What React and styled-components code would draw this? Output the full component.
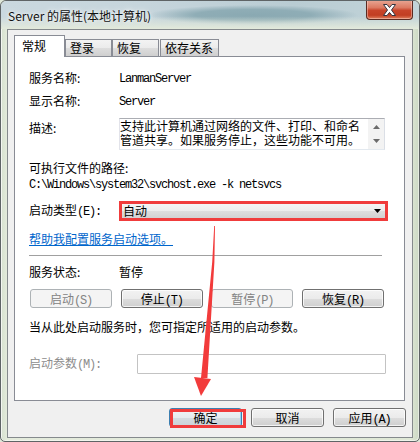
import React from "react";
import styled, { createGlobalStyle } from "styled-components";

const CJK = `"Noto Sans CJK SC", "Noto Sans", sans-serif`;
const MONO = `"Liberation Mono", "DejaVu Sans Mono", monospace`;

const Global = createGlobalStyle`
  html, body { margin: 0; padding: 0; width: 420px; height: 442px; overflow: hidden; background: #dfe7d8; }
  #root { width: 420px; height: 442px; }
  * { box-sizing: border-box; }
`;

const Window = styled.div`
  position: relative;
  width: 420px;
  height: 442px;
  border: 1px solid #5f6466;
  border-radius: 6px 6px 5px 5px;
  background: linear-gradient(90deg, #d6e1cf 0%, #e4ebdc 1.5%, #e2eadb 50%, #dfe8d6 98%, #cbd8c3 100%);
  box-shadow: inset 1px 1px 0 rgba(255, 255, 255, 0.7), inset -1px -1px 0 rgba(255, 255, 255, 0.5);
  display: flex;
  flex-direction: column;
  overflow: hidden;
  font-family: ${CJK};
  font-size: 12px;
  color: #000;
`;

const TitleBar = styled.div`
  height: 28px;
  flex-shrink: 0;
  display: flex;
  align-items: flex-start;
  justify-content: space-between;
  padding: 0 6px 0 7px;
  border-radius: 5px 5px 0 0;
  background:
    linear-gradient(180deg, rgba(228, 235, 220, 0) 0%, rgba(228, 235, 220, 0) 55%, #e3eadb 100%),
    radial-gradient(ellipse 105px 10px at 252px 14px, #8aa9b2 0%, #8fadb6 55%, rgba(150, 178, 186, 0) 100%),
    linear-gradient(90deg, #cad8df 0%, #c6d5dc 35%, #b9ccd3 70%, #c2d4d9 100%);
`;

const Title = styled.div`
  margin-top: 6px;
  font-family: ${CJK};
  font-size: 12px;
  line-height: 17px;
  color: #101010;
  text-shadow: 0 0 6px rgba(255, 255, 255, 0.9), 0 0 3px rgba(255, 255, 255, 0.8);
  white-space: nowrap;
`;

const CloseBtn = styled.div`
  margin-top: -1px;
  width: 47px;
  height: 20px;
  border: 1px solid #5a2b22;
  border-top: none;
  border-radius: 0 0 4px 4px;
  background: linear-gradient(180deg, #e9a896 0%, #dc7a62 40%, #c8442a 55%, #c23e22 80%, #e0805f 100%);
  box-shadow: inset 0 0 0 1px rgba(255, 220, 210, 0.45);
  display: flex;
  align-items: center;
  justify-content: center;
`;

const Client = styled.div`
  flex: 1;
  margin: 0 6px 3px 6px;
  border: 1px solid #858a8d;
  background: #f0f0f0;
  padding: 5px 6px 0 6px;
  display: flex;
  flex-direction: column;
`;

const TabStrip = styled.div`
  height: 22px;
  margin-bottom: -1px;
  display: flex;
  align-items: flex-end;
  position: relative;
  z-index: 2;
`;

const Tab = styled.div`
  width: ${(p) => p.$w}px;
  margin-left: ${(p) => p.$ml || 0}px;
  height: ${(p) => (p.$active ? 22 : 17)}px;
  margin-bottom: ${(p) => (p.$active ? 0 : 1)}px;
  border: 1px solid #898c95;
  border-bottom: none;
  background: ${(p) =>
    p.$active ? "#ffffff" : "linear-gradient(180deg, #f3f3f3 0%, #ebebeb 50%, #dddddd 51%, #cfcfcf 100%)"};
  padding-left: ${(p) => (p.$active ? 7 : 4)}px;
  line-height: ${(p) => (p.$active ? 19 : 16)}px;
  font-size: 12px;
  white-space: nowrap;
`;

const Panel = styled.div`
  width: 391px;
  height: 345px;
  border: 1px solid #898c95;
  background: #ffffff;
  padding: 11px 0 0 14px;
  display: flex;
  flex-direction: column;
  position: relative;
  z-index: 1;
`;

const Row = styled.div`
  display: flex;
  align-items: ${(p) => (p.$top ? "flex-start" : "center")};
  height: ${(p) => p.$h}px;
  margin-top: ${(p) => p.$mt || 0}px;
  flex-shrink: 0;
`;

const Label = styled.div`
  width: ${(p) => p.$w || 90}px;
  flex-shrink: 0;
  line-height: 20px;
  color: ${(p) => (p.$disabled ? "#8d8d8d" : "#000")};
  white-space: nowrap;
`;

const Value = styled.div`
  line-height: 20px;
  white-space: nowrap;
`;

const Latin = styled.span`
  font-family: ${MONO};
  font-size: 12px;
  letter-spacing: -1.2px;
`;

const Line = styled.div`
  line-height: ${(p) => p.$lh}px;
  margin-top: ${(p) => p.$mt || 0}px;
  white-space: nowrap;
  flex-shrink: 0;
`;

const Link = styled(Line)`
  color: #0066cc;
  text-decoration: underline;
  text-underline-offset: 1px;
  align-self: flex-start;
`;

const DescBox = styled.div`
  width: 266px;
  height: 32px;
  border: 1px solid;
  border-color: #abadb3 #dbdfe6 #e3e9ef #e2e3ea;
  background: #fff;
  display: flex;
`;

const DescText = styled.div`
  flex: 1;
  line-height: 14px;
  white-space: nowrap;
`;

const ScrollBar = styled.div`
  width: 16px;
  background: #f3f3f3;
  display: flex;
  flex-direction: column;
  align-items: center;
  justify-content: space-between;
  padding: 6px 0 6px;
`;

const Combo = styled.div`
  width: 269px;
  height: 20px;
  border: 3px solid #f03c3c;
  background: linear-gradient(180deg, #f4f4f4 0%, #ececec 50%, #dedede 51%, #d2d2d2 100%);
  display: flex;
  align-items: center;
  justify-content: space-between;
  padding: 0 4px 0 1px;
  line-height: 14px;
`;

const Separator = styled.div`
  width: 353px;
  height: 1px;
  margin-top: 8px;
  background: #a0a0a0;
  flex-shrink: 0;
`;

const ButtonRow = styled.div`
  width: 354px;
  margin-left: 1px;
  margin-top: ${(p) => p.$mt || 0}px;
  height: 19px;
  display: flex;
  justify-content: space-between;
  flex-shrink: 0;
`;

const Btn = styled.button`
  width: ${(p) => p.$w}px;
  height: 19px;
  padding: 0;
  margin: 0;
  border: 1px solid ${(p) => (p.disabled ? "#adb2b5" : p.$default ? "#3c7fb1" : "#707070")};
  border-radius: 3px;
  background: ${(p) =>
    p.disabled
      ? "#f4f4f4"
      : p.$default
      ? "linear-gradient(180deg, #f1f4f6 0%, #e6ebee 50%, #d5dce0 51%, #cbd3d8 100%)"
      : "linear-gradient(180deg, #f2f2f2 0%, #ebebeb 50%, #dddddd 51%, #cfcfcf 100%)"};
  box-shadow: ${(p) =>
    p.disabled ? "none" : p.$default ? "inset 0 0 0 1px #8fd6f5" : "inset 0 0 0 1px rgba(255,255,255,0.75)"};
  color: ${(p) => (p.disabled ? "#838383" : "#000")};
  font-family: ${CJK};
  font-size: 12px;
  line-height: 17px;
  white-space: nowrap;
  cursor: default;
`;

const Input = styled.div`
  width: 249px;
  height: 20px;
  border: 1px solid #c3c3c3;
  border-radius: 1px;
  background: #fff;
`;

const ButtonBar = styled.div`
  margin-top: 7px;
  display: flex;
  justify-content: flex-end;
  gap: 9px;
`;

const Marked = styled.div`
  position: relative;
  &::after {
    content: "";
    position: absolute;
    top: 1px;
    left: 1px;
    right: -4px;
    bottom: -1px;
    border: 3px solid #f03c3c;
    pointer-events: none;
  }
`;

const Overlay = styled.svg`
  position: absolute;
  top: -1px;
  left: -1px;
  pointer-events: none;
  z-index: 10;
`;

const Arrow = ({ up, color = "#6b6b6b" }) => (
  <svg width="7" height="4" viewBox="0 0 7 4">
    <polygon points={up ? "3.5,0 7,4 0,4" : "0,0 7,0 3.5,4"} fill={color} />
  </svg>
);

export default function App() {
  return (
    <>
      <Global />
      <Window>
        <TitleBar>
          <Title>Server 的属性(本地计算机)</Title>
          <CloseBtn>
            <svg width="15" height="12" viewBox="0 0 15 12">
              <polygon
                points="1.5,0.5 5,0.5 7.5,3.6 10,0.5 13.5,0.5 9.5,6 13.5,11.5 10,11.5 7.5,8.4 5,11.5 1.5,11.5 5.5,6"
                fill="#ffffff"
                stroke="#34343f"
                strokeWidth="1"
                strokeLinejoin="round"
              />
            </svg>
          </CloseBtn>
        </TitleBar>
        <Client>
          <TabStrip>
            <Tab $active $w={51}>常规</Tab>
            <Tab $w={47}>登录</Tab>
            <Tab $w={47}>恢复</Tab>
            <Tab $w={59} $ml={1}>依存关系</Tab>
          </TabStrip>
          <Panel>
            <Row $h={20}>
              <Label>服务名称:</Label>
              <Value><Latin>LanmanServer</Latin></Value>
            </Row>
            <Row $h={20} $mt={3}>
              <Label>显示名称:</Label>
              <Value><Latin>Server</Latin></Value>
            </Row>
            <Row $h={32} $mt={7} $top>
              <Label>描述:</Label>
              <DescBox>
                <DescText>
                  <div>支持此计算机通过网络的文件、打印、和命名</div>
                  <div>管道共享。如果服务停止，这些功能不可用。</div>
                </DescText>
                <ScrollBar>
                  <Arrow up />
                  <Arrow />
                </ScrollBar>
              </DescBox>
            </Row>
            <Line $lh={16} $mt={10}>可执行文件的路径:</Line>
            <Line $lh={14}>
              <Latin>{"C:\\Windows\\system32\\svchost.exe -k netsvcs"}</Latin>
            </Line>
            <Row $h={20} $mt={9}>
              <Label>启动类型<Latin>(E):</Latin></Label>
              <Combo>
                <span>自动</span>
                <Arrow color="#000" />
              </Combo>
            </Row>
            <Link $lh={16} $mt={10}>帮助我配置服务启动选项。</Link>
            <Separator />
            <Row $h={16} $mt={8}>
              <Label>服务状态:</Label>
              <Value>暂停</Value>
            </Row>
            <ButtonRow $mt={9}>
              <Btn $w={82} disabled>启动<Latin>(S)</Latin></Btn>
              <Btn $w={82}>停止<Latin>(T)</Latin></Btn>
              <Btn $w={82} disabled>暂停<Latin>(P)</Latin></Btn>
              <Btn $w={82}>恢复<Latin>(R)</Latin></Btn>
            </ButtonRow>
            <Line $lh={16} $mt={11}>当从此处启动服务时，您可指定所适用的启动参数。</Line>
            <Row $h={20} $mt={19}>
              <Label $w={108} $disabled>启动参数<Latin>(M):</Latin></Label>
              <Input />
            </Row>
          </Panel>
          <ButtonBar>
            <Marked>
              <Btn $w={73} $default>确定</Btn>
            </Marked>
            <Btn $w={73}>取消</Btn>
            <Btn $w={73}>应用<Latin>(A)</Latin></Btn>
          </ButtonBar>
        </Client>
        <Overlay width="420" height="442" viewBox="0 0 420 442">
          <polygon
            points="214.2,226 215,226 214.4,262 207.4,378 201,378 212.2,262"
            fill="#f23b3b"
          />
          <polygon points="194,377 211,379 201,396" fill="#f23b3b" />
        </Overlay>
      </Window>
    </>
  );
}
